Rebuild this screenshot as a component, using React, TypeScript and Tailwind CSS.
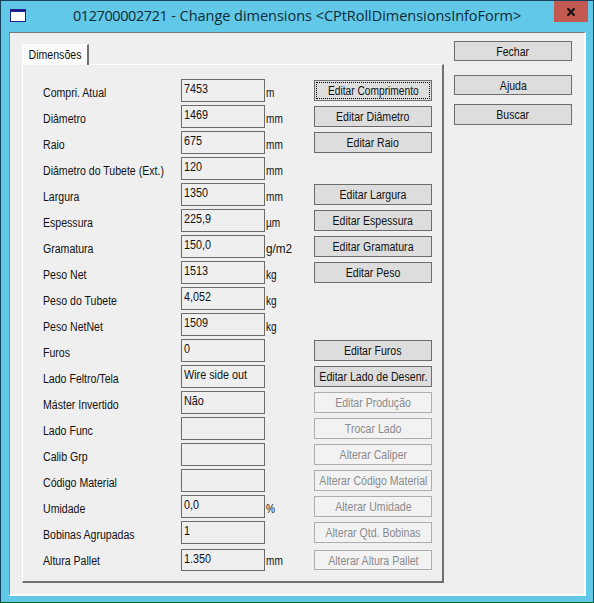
type Row = {
  label: string;
  value: string;
  unit?: string;
  action?: string;
  disabled?: boolean;
  focused?: boolean;
};

const rows: Row[] = [
  { label: "Compri. Atual", value: "7453", unit: "m", action: "Editar Comprimento", focused: true },
  { label: "Diâmetro", value: "1469", unit: "mm", action: "Editar Diâmetro" },
  { label: "Raio", value: "675", unit: "mm", action: "Editar Raio" },
  { label: "Diâmetro do Tubete (Ext.)", value: "120", unit: "mm" },
  { label: "Largura", value: "1350", unit: "mm", action: "Editar Largura" },
  { label: "Espessura", value: "225,9", unit: "µm", action: "Editar Espessura" },
  { label: "Gramatura", value: "150,0", unit: "g/m2", action: "Editar Gramatura" },
  { label: "Peso Net", value: "1513", unit: "kg", action: "Editar Peso" },
  { label: "Peso do Tubete", value: "4,052", unit: "kg" },
  { label: "Peso NetNet", value: "1509", unit: "kg" },
  { label: "Furos", value: "0", action: "Editar Furos" },
  { label: "Lado Feltro/Tela", value: "Wire side out", action: "Editar Lado de Desenr." },
  { label: "Máster Invertido", value: "Não", action: "Editar Produção", disabled: true },
  { label: "Lado Func", value: "", action: "Trocar Lado", disabled: true },
  { label: "Calib Grp", value: "", action: "Alterar Caliper", disabled: true },
  { label: "Código Material", value: "", action: "Alterar Código Material", disabled: true },
  { label: "Umidade", value: "0,0", unit: "%", action: "Alterar Umidade", disabled: true },
  { label: "Bobinas Agrupadas", value: "1", action: "Alterar Qtd. Bobinas", disabled: true },
  { label: "Altura Pallet", value: "1.350", unit: "mm", action: "Alterar Altura Pallet", disabled: true },
];

function Button({ text, height = "h-[21px]", disabled, focused }: { text: string; height?: string; disabled?: boolean; focused?: boolean }) {
  return (
    <button
      disabled={disabled}
      className={`flex w-[118px] shrink-0 border p-px ${height} ${
        disabled ? "border-[#adadad] bg-[#f2f2f2] text-[#8b8b8b]" : "border-[#6c6c6c] bg-[#dddddd] text-[#111111]"
      }`}
    >
      <span className={`flex h-full w-full items-center justify-center whitespace-nowrap border leading-none ${focused ? "border-dotted border-black" : "border-transparent"}`}>
        <span className={`inline-block pt-px ${focused ? "scale-x-[0.85]" : "scale-x-[0.88]"}`}>{text}</span>
      </span>
    </button>
  );
}

function FieldRow({ row, last }: { row: Row; last: boolean }) {
  return (
    <div className="flex h-[26px] items-start">
      <span className="w-[138px] shrink-0 whitespace-nowrap pt-[7px] leading-[14px]">
        <span className="inline-block origin-left scale-x-[0.88]">{row.label}</span>
      </span>
      <div className={`w-[84px] shrink-0 whitespace-nowrap border border-[#6c6c6c] bg-[#efefef] pl-[2px] pt-[2px] leading-[14px] ${last ? "mt-[2px] h-[22px]" : "h-[23px]"}`}>
        <span className="inline-block origin-left scale-x-[0.9]">{row.value}</span>
      </div>
      <span className="w-[49px] shrink-0 whitespace-nowrap pl-px pt-[7px] leading-[14px]">
        <span className={`inline-block origin-left ${row.unit === "g/m2" ? "scale-x-[0.98]" : "scale-x-[0.84]"}`}>{row.unit}</span>
      </span>
      {row.action && (
        <div className={last ? "pt-[3px]" : "pt-px"}>
          <Button text={row.action} disabled={row.disabled} focused={row.focused} height={last ? "h-[20px]" : "h-[21px]"} />
        </div>
      )}
    </div>
  );
}

export default function App() {
  return (
    <div className="flex h-[603px] w-[594px] flex-col border border-[#17405f] border-b-[#006c21] bg-[#62c8e8] font-['Liberation_Sans',Arial,sans-serif] text-[12px] text-[#111111]">
      <header className="flex h-[31px] shrink-0 items-start pl-[9px] pr-[5px]">
        <svg className="mt-[8px] shrink-0" width="16" height="13" viewBox="0 0 16 13" shapeRendering="crispEdges">
          <rect width="16" height="13" fill="#20208f" />
          <rect x="1" y="3" width="14" height="9" fill="#ffffff" />
        </svg>
        <h1 className="ml-[47px] mt-[4px] flex-1 whitespace-nowrap font-['Open_Sans','Noto_Sans',sans-serif] text-[14.5px] leading-[22px] tracking-[-0.03px] text-[#112b36]">
          <span className="tracking-[-0.42px]">012700002721</span> - Change dimensions &lt;CPtRollDimensionsInfoForm&gt;
        </h1>
        <button aria-label="Close" className="flex h-[21px] w-[34px] shrink-0 items-center justify-center bg-[#c35a51]">
          <svg width="10" height="8" viewBox="0 0 10 8">
            <path d="M1.5 0.3 8.5 7.7M8.5 0.3 1.5 7.7" stroke="#121212" strokeWidth="2.2" />
          </svg>
        </button>
      </header>

      <main className="ml-[8px] flex h-[564px] w-[577px] shrink-0 items-start border-b-2 border-l border-r-2 border-t border-b-white border-l-[#858585] border-r-white border-t-[#777777] bg-[#efefef]">
        <section className="ml-[12px] mt-[11px] w-[422px]">
          <div className="relative z-10 -mb-px flex h-[21px] w-[67px] items-center justify-center border-l border-r-2 border-t border-l-white border-r-[#707070] border-t-white bg-[#fbfbfb]">
            <span className="inline-block scale-x-[0.88]">Dimensões</span>
          </div>
          <div className="h-[519px] border-b-2 border-l border-r-2 border-t border-b-[#707070] border-l-white border-r-[#707070] border-t-white pl-[20px] pt-[14px]">
            {rows.map((row, i) => (
              <FieldRow key={row.label} row={row} last={i === rows.length - 1} />
            ))}
          </div>
        </section>
        <nav className="ml-[10px] mt-[8px] flex flex-col">
          <Button text="Fechar" height="h-[20px]" />
          <div className="mt-[14px]"><Button text="Ajuda" height="h-[20px]" /></div>
          <div className="mt-[9px]"><Button text="Buscar" /></div>
        </nav>
      </main>
    </div>
  );
}
